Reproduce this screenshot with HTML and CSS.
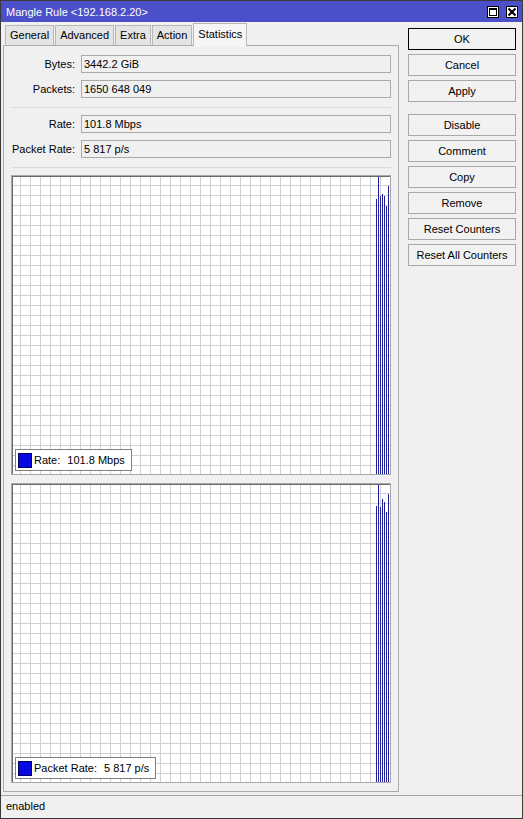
FILE: index.html
```html
<!DOCTYPE html>
<html lang="en">
<head>
    <meta charset="UTF-8">
    <meta name="viewport" content="width=device-width, initial-scale=1.0">
    <title>Mangle Rule &lt;192.168.2.20&gt;</title>
    <link rel="stylesheet" href="styles.css">
</head>
<body>
    <div class="window">
        <div class="titlebar">
            <span class="title">Mangle Rule &lt;192.168.2.20&gt;</span>
            <div class="title-buttons">
                <span class="tbtn">
                    <svg width="10" height="10" viewBox="0 0 10 10">
                        <rect x="1.5" y="1.5" width="7" height="7" fill="none" stroke="#000" stroke-width="1"/>
                        <line x1="1" y1="2" x2="9" y2="2" stroke="#000" stroke-width="2"/>
                    </svg>
                </span>
                <span class="tbtn">
                    <svg width="10" height="10" viewBox="0 0 10 10">
                        <path d="M1.5 1.5 L8.5 8.5 M8.5 1.5 L1.5 8.5" stroke="#000" stroke-width="2"/>
                    </svg>
                </span>
            </div>
        </div>

        <div class="content">
            <div class="main">
                <div class="tabs">
                    <div class="tab">General</div>
                    <div class="tab">Advanced</div>
                    <div class="tab">Extra</div>
                    <div class="tab">Action</div>
                    <div class="tab active">Statistics</div>
                </div>
                <div class="panel">
                    <div class="field"><label>Bytes:</label><div class="value">3442.2 GiB</div></div>
                    <div class="field"><label>Packets:</label><div class="value">1650 648 049</div></div>
                    <div class="separator"></div>
                    <div class="field"><label>Rate:</label><div class="value">101.8 Mbps</div></div>
                    <div class="field"><label>Packet Rate:</label><div class="value">5 817 p/s</div></div>
                    <div class="separator"></div>

                    <div class="graph">
                        <div class="bars">
                            <span style="height: 275px"></span>
                            <span style="height: 297px"></span>
                            <span style="height: 278px"></span>
                            <span style="height: 280px"></span>
                            <span style="height: 278px"></span>
                            <span style="height: 268px"></span>
                            <span style="height: 288px"></span>
                        </div>
                        <div class="legend"><span class="swatch"></span>Rate:<span class="legend-value">101.8 Mbps</span></div>
                    </div>

                    <div class="graph">
                        <div class="bars">
                            <span style="height: 276px"></span>
                            <span style="height: 297px"></span>
                            <span style="height: 275px"></span>
                            <span style="height: 283px"></span>
                            <span style="height: 280px"></span>
                            <span style="height: 270px"></span>
                            <span style="height: 288px"></span>
                        </div>
                        <div class="legend"><span class="swatch"></span>Packet Rate:<span class="legend-value">5 817 p/s</span></div>
                    </div>
                </div>
            </div>

            <div class="side">
                <button class="default">OK</button>
                <button>Cancel</button>
                <button>Apply</button>
                <button class="group-start">Disable</button>
                <button>Comment</button>
                <button>Copy</button>
                <button>Remove</button>
                <button>Reset Counters</button>
                <button>Reset All Counters</button>
            </div>
        </div>

        <div class="statusbar">enabled</div>
    </div>
</body>
</html>
```

FILE: styles.css
```css
* {
    box-sizing: border-box;
}
body {
    margin: 0;
    font-family: "Liberation Sans", Arial, sans-serif;
    font-size: 11px;
    color: #000;
}
.window {
    width: 523px;
    height: 819px;
    border: 1px solid #3a3a3a;
    background: #f0f0f0;
    display: flex;
    flex-direction: column;
}

/* title bar */
.titlebar {
    height: 21px;
    flex: none;
    background: #4b50c8;
    color: #fff;
    display: flex;
    align-items: center;
    justify-content: space-between;
    padding: 1px 4px 0 5px;
}
.title-buttons {
    display: flex;
    gap: 7px;
}
.tbtn {
    width: 12px;
    height: 12px;
    background: #fff;
    border: 1px solid #000;
    display: flex;
    align-items: center;
    justify-content: center;
}

.content {
    flex: 1;
    display: flex;
}
.main {
    width: 396px;
    margin-left: 2px;
    padding-bottom: 3px;
    display: flex;
    flex-direction: column;
}

/* tabs */
.tabs {
    height: 23px;
    flex: none;
    display: flex;
    align-items: flex-end;
    gap: 1px;
    padding-left: 2px;
}
.tab {
    height: 20px;
    line-height: 19px;
    padding: 0 4px;
    border: 1px solid #b8b8b8;
    border-bottom: none;
    background: #e4e4e4;
}
.tab.active {
    height: 23px;
    line-height: 20px;
    margin-bottom: -1px;
    background: #f6f6f6;
    position: relative;
    z-index: 1;
}

.panel {
    flex: 1;
    border: 1px solid #ababab;
    padding: 9px 7px 8px 7px;
    display: flex;
    flex-direction: column;
}
.field {
    display: flex;
    align-items: center;
    height: 18px;
    flex: none;
}
.field + .field {
    margin-top: 7px;
}
.field label {
    width: 64px;
    text-align: right;
    margin-right: 6px;
}
.value {
    flex: 1;
    height: 18px;
    line-height: 16px;
    padding-left: 2px;
    border: 1px solid #aaaaaa;
    background: #f0f0f0;
}
.separator {
    height: 1px;
    flex: none;
    margin: 9px 0 7px 1px;
    background: #d9d9d9;
}

/* graphs */
.graph {
    flex: 1;
    position: relative;
    border: 1px solid #a8a8a8;
    box-shadow: inset 1px 1px 0 #6a6a6a;
    background-color: #fff;
    background-image:
        linear-gradient(to right, #d0d0d0 1px, transparent 1px),
        linear-gradient(to bottom, #d0d0d0 1px, transparent 1px);
    background-size: 10px 10px;
    background-position: 8px 9px;
}
.graph + .graph {
    margin-top: 8px;
}
.bars {
    position: absolute;
    right: 1px;
    bottom: 0;
    display: flex;
    align-items: flex-end;
    gap: 1px;
}
.bars span {
    width: 1px;
    background: #1f1f98;
}
.legend {
    position: absolute;
    left: 3px;
    bottom: 3px;
    height: 22px;
    display: flex;
    align-items: center;
    gap: 2px;
    padding: 0 6px 0 2px;
    background: #fff;
    border: 1px solid #808080;
}
.swatch {
    width: 14px;
    height: 15px;
    background: #0808e0;
    border: 1px solid #000060;
}
.legend-value {
    margin-left: 5px;
}

/* buttons column */
.side {
    width: 108px;
    margin-left: 9px;
    padding-top: 6px;
    display: flex;
    flex-direction: column;
    gap: 4px;
}
.side button {
    height: 22px;
    font-family: inherit;
    font-size: 11px;
    color: #000;
    background: #f2f2f2;
    border: 1px solid #a9a9a9;
    padding: 0;
}
.side button.default {
    border-color: #000;
}
.side button.group-start {
    margin-top: 8px;
}

.statusbar {
    height: 23px;
    flex: none;
    border-top: 1px solid #a3a3a3;
    padding-left: 5px;
    line-height: 20px;
}
```
